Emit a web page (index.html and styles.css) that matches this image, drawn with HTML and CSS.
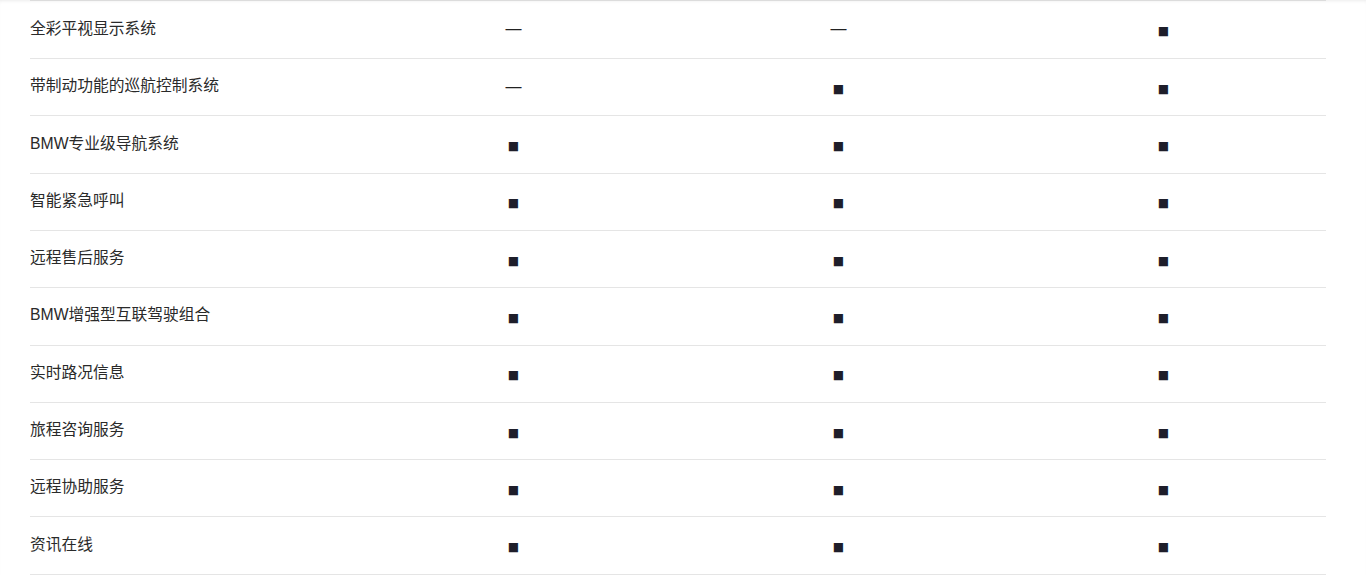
FILE: index.html
```html
<!DOCTYPE html>
<html lang="zh-CN">
<head>
<meta charset="utf-8">
<title>配置表</title>
<link rel="stylesheet" href="styles.css">
</head>
<body>
<div class="page">
  <div class="table">
    <div class="row"><div class="name">全彩平视显示系统</div><div class="val dash">—</div><div class="val dash">—</div><div class="val sq">■</div></div>
    <div class="row"><div class="name">带制动功能的巡航控制系统</div><div class="val dash">—</div><div class="val sq">■</div><div class="val sq">■</div></div>
    <div class="row"><div class="name">BMW专业级导航系统</div><div class="val sq">■</div><div class="val sq">■</div><div class="val sq">■</div></div>
    <div class="row"><div class="name">智能紧急呼叫</div><div class="val sq">■</div><div class="val sq">■</div><div class="val sq">■</div></div>
    <div class="row"><div class="name">远程售后服务</div><div class="val sq">■</div><div class="val sq">■</div><div class="val sq">■</div></div>
    <div class="row"><div class="name">BMW增强型互联驾驶组合</div><div class="val sq">■</div><div class="val sq">■</div><div class="val sq">■</div></div>
    <div class="row"><div class="name">实时路况信息</div><div class="val sq">■</div><div class="val sq">■</div><div class="val sq">■</div></div>
    <div class="row"><div class="name">旅程咨询服务</div><div class="val sq">■</div><div class="val sq">■</div><div class="val sq">■</div></div>
    <div class="row"><div class="name">远程协助服务</div><div class="val sq">■</div><div class="val sq">■</div><div class="val sq">■</div></div>
    <div class="row"><div class="name">资讯在线</div><div class="val sq">■</div><div class="val sq">■</div><div class="val sq">■</div></div>
  </div>
</div>
</body>
</html>
```

FILE: styles.css
```css
html, body {
  margin: 0;
  padding: 0;
  background: #ffffff;
}
body {
  font-family: "Liberation Sans", "Noto Sans CJK SC", sans-serif;
  color: #2a2a2a;
  overflow: hidden;
}
.page {
  padding: 0 40px 0 30px;
  box-shadow: inset 0 3px 4px -3px rgba(0, 0, 0, 0.12);
}
.table {
  border-top: 1px solid #dcdcdc;
  padding-top: 0.8px;
}
.row {
  display: grid;
  grid-template-columns: 321px 325px 325px 325px;
  align-items: center;
  height: 57.3px;
  box-sizing: border-box;
  border-bottom: 1px solid #e5e5e5;
}
.name {
  font-size: 15.75px;
  line-height: 20px;
  padding-bottom: 2px;
}
.val {
  text-align: center;
  line-height: 20px;
}
.dash {
  font-size: 16px;
  color: #222222;
  padding-bottom: 1px;
}
.sq {
  font-family: "DejaVu Sans", sans-serif;
  font-size: 12px;
  color: #1e1e2a;
  padding-top: 3px;
}
```
